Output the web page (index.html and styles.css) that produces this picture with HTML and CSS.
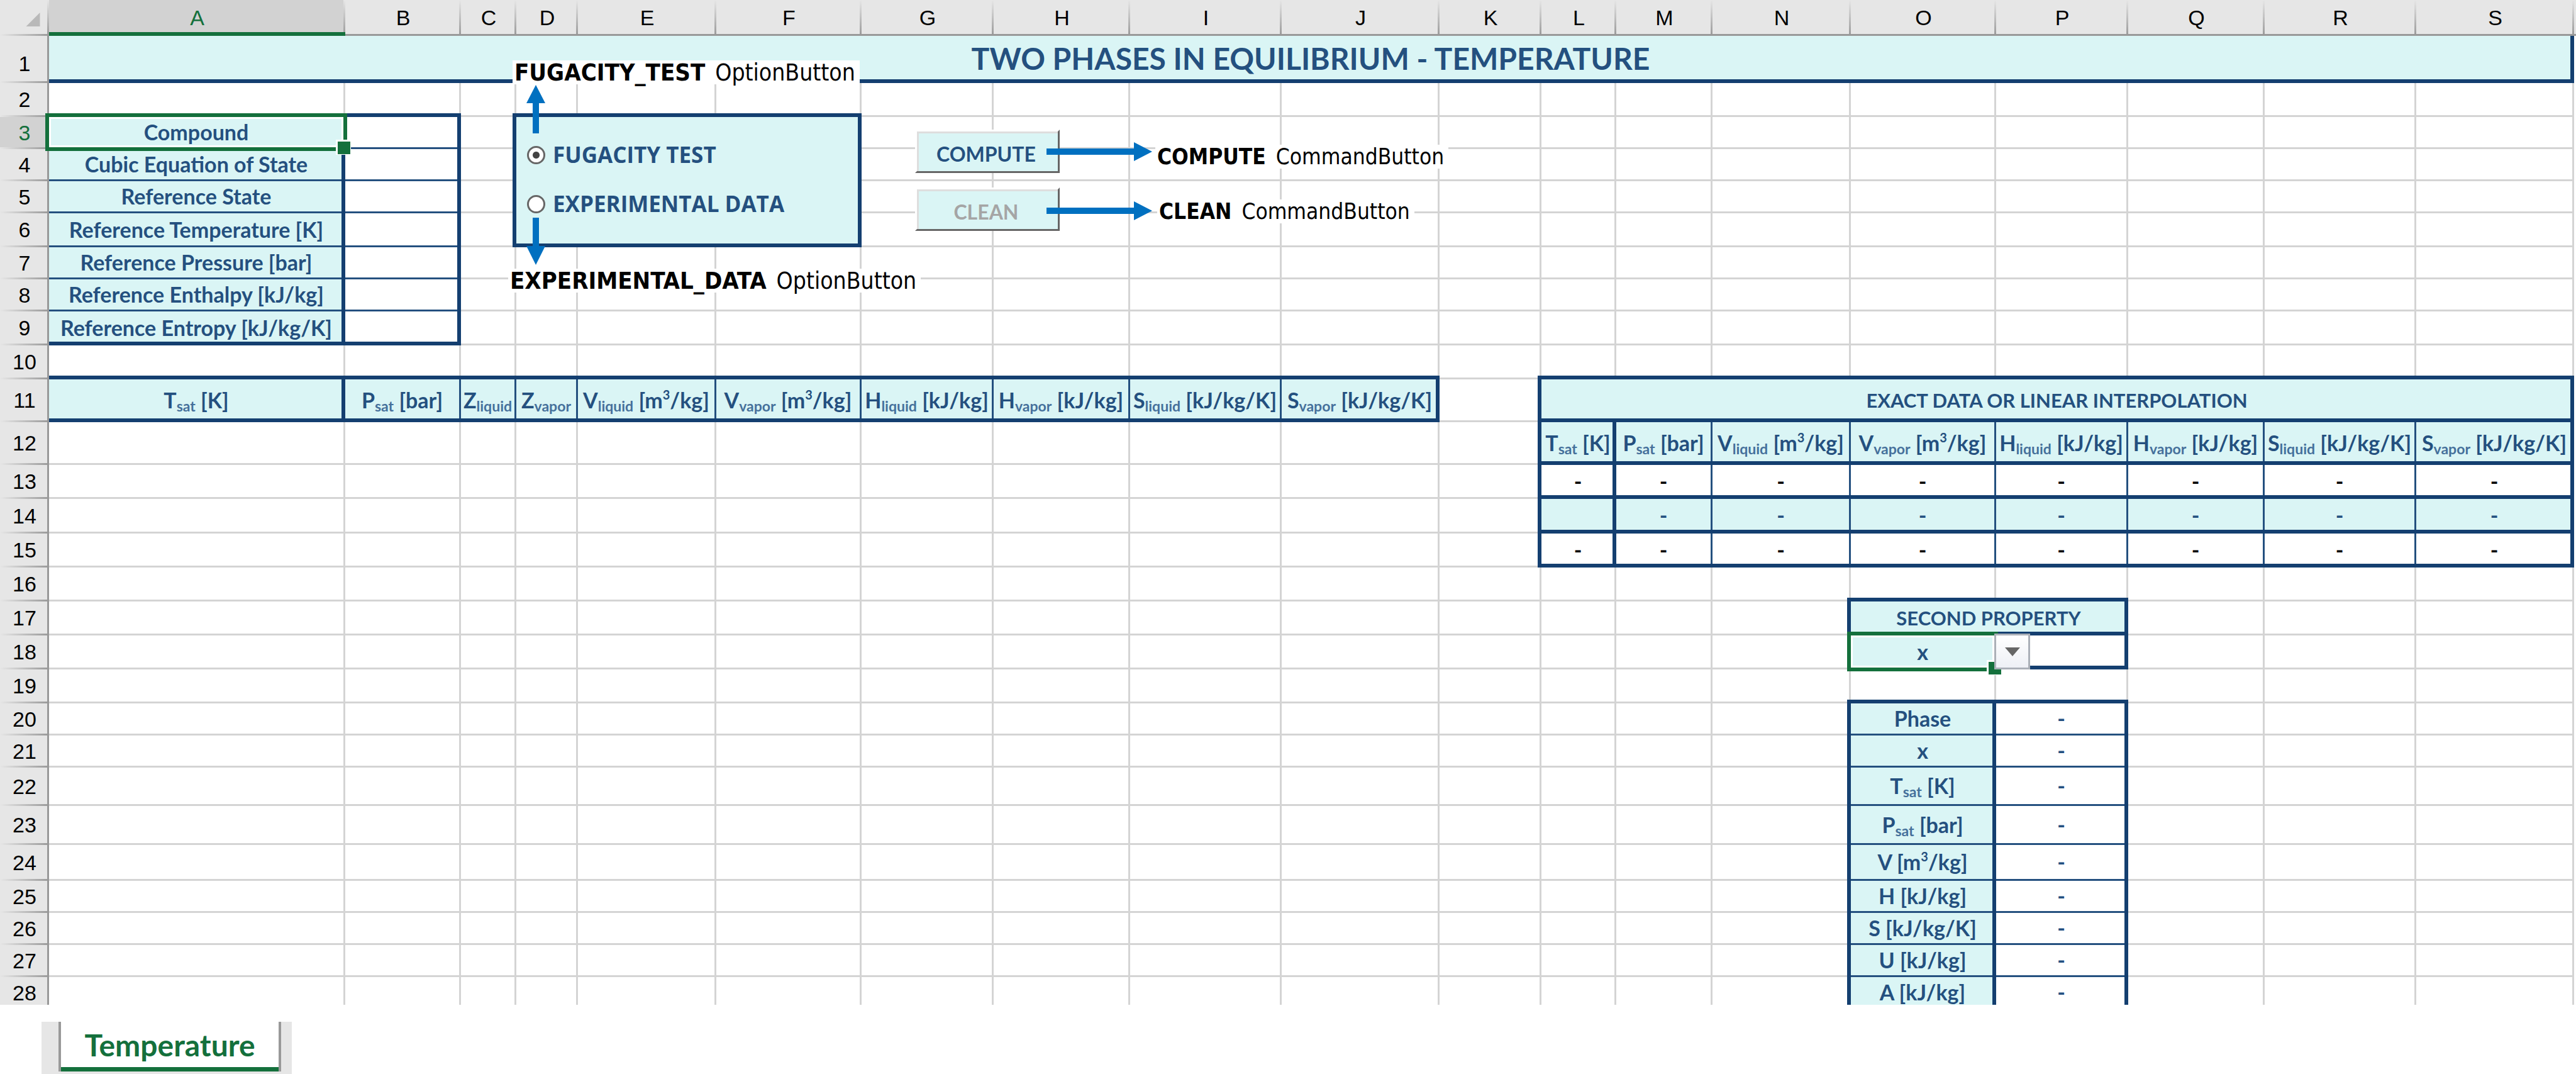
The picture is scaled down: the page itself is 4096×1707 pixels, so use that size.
FILE: index.html
```html
<!DOCTYPE html>
<html lang="en">
<head>
<meta charset="utf-8">
<title>Two phases in equilibrium - Temperature</title>
<link rel="stylesheet" href="styles.css">
</head>
<body>
<main class="sheet">
<table class="grid">
<colgroup><col class="w78"><col class="w471"><col class="w184"><col class="w88"><col class="w98"><col class="w220"><col class="w231"><col class="w210"><col class="w217"><col class="w241"><col class="w251"><col class="w162"><col class="w119"><col class="w153"><col class="w220"><col class="w231"><col class="w210"><col class="w217"><col class="w241"><col class="w251"><col class="w3"></colgroup>
<thead>
<tr class="letters"><td class="corner"><svg class="triangle" viewBox="0 0 22 22" aria-hidden="true"><path d="M22 0V22H0Z"/></svg></td><th class="active">A</th><th>B</th><th>C</th><th>D</th><th>E</th><th>F</th><th>G</th><th>H</th><th>I</th><th>J</th><th>K</th><th>L</th><th>M</th><th>N</th><th>O</th><th>P</th><th>Q</th><th>R</th><th>S</th><td class="edge"></td></tr>
</thead>
<tbody>
<tr class="h75"><th class="low">1</th><td colspan="19" class="fill title mr mb">TWO PHASES IN EQUILIBRIUM - TEMPERATURE</td><td rowspan="28" class="blank"></td></tr>
<tr class="h54"><th>2</th><td class="mb"></td><td class="mb"></td><td class="joint"></td><td class="mb"></td><td class="mb"></td><td class="mb"></td><td></td><td></td><td></td><td></td><td></td><td></td><td></td><td></td><td></td><td></td><td></td><td></td><td></td></tr>
<tr class="h51"><th class="active">3</th><td class="fill mr tb">Compound<span class="selection"></span></td><td class="mr tb"></td><td class="mr"></td><td colspan="3" rowspan="4" class="fill mr mb options"><div class="option-list"><label class="option"><input type="radio" name="mode" checked>FUGACITY TEST</label><label class="option"><input type="radio" name="mode">EXPERIMENTAL DATA</label></div></td><td></td><td></td><td></td><td></td><td></td><td></td><td></td><td></td><td></td><td></td><td></td><td></td><td></td></tr>
<tr class="h51"><th>4</th><td class="fill mr tb">Cubic Equation of State</td><td class="mr tb"></td><td class="mr"></td><td></td><td></td><td></td><td></td><td></td><td></td><td></td><td></td><td></td><td></td><td></td><td></td><td></td></tr>
<tr class="h51"><th>5</th><td class="fill mr tb">Reference State</td><td class="mr tb"></td><td class="mr"></td><td></td><td></td><td></td><td></td><td></td><td></td><td></td><td></td><td></td><td></td><td></td><td></td><td></td></tr>
<tr class="h54"><th>6</th><td class="fill mr tb">Reference Temperature [K]</td><td class="mr tb"></td><td class="mr"></td><td></td><td></td><td></td><td></td><td></td><td></td><td></td><td></td><td></td><td></td><td></td><td></td><td></td></tr>
<tr class="h51"><th>7</th><td class="fill mr tb">Reference Pressure [bar]</td><td class="mr tb"></td><td></td><td></td><td></td><td></td><td></td><td></td><td></td><td></td><td></td><td></td><td></td><td></td><td></td><td></td><td></td><td></td><td></td></tr>
<tr class="h51"><th>8</th><td class="fill mr tb">Reference Enthalpy [kJ/kg]</td><td class="mr tb"></td><td></td><td></td><td></td><td></td><td></td><td></td><td></td><td></td><td></td><td></td><td></td><td></td><td></td><td></td><td></td><td></td><td></td></tr>
<tr class="h54"><th>9</th><td class="fill mr mb">Reference Entropy [kJ/kg/K]</td><td class="mr mb"></td><td></td><td></td><td></td><td></td><td></td><td></td><td></td><td></td><td></td><td></td><td></td><td></td><td></td><td></td><td></td><td></td><td></td></tr>
<tr class="h54"><th>10</th><td class="mb"></td><td class="mb"></td><td class="mb"></td><td class="mb"></td><td class="mb"></td><td class="mb"></td><td class="mb"></td><td class="mb"></td><td class="mb"></td><td class="mb"></td><td class="joint"></td><td class="mb"></td><td class="mb"></td><td class="mb"></td><td class="mb"></td><td class="mb"></td><td class="mb"></td><td class="mb"></td><td class="mb"></td></tr>
<tr class="h68"><th>11</th><td class="fill mr mb">T<sub>sat</sub> [K]</td><td class="fill tr mb">P<sub>sat</sub> [bar]</td><td class="fill tr mb">Z<sub>liquid</sub></td><td class="fill tr mb">Z<sub>vapor</sub></td><td class="fill tr mb">V<sub>liquid</sub> [m<sup>3</sup>/kg]</td><td class="fill tr mb">V<sub>vapor</sub> [m<sup>3</sup>/kg]</td><td class="fill tr mb">H<sub>liquid</sub> [kJ/kg]</td><td class="fill tr mb">H<sub>vapor</sub> [kJ/kg]</td><td class="fill tr mb">S<sub>liquid</sub> [kJ/kg/K]</td><td class="fill mr mb">S<sub>vapor</sub> [kJ/kg/K]</td><td class="mr"></td><td colspan="8" class="fill caps mr mb">EXACT DATA OR LINEAR INTERPOLATION</td></tr>
<tr class="h68"><th>12</th><td></td><td></td><td></td><td></td><td></td><td></td><td></td><td></td><td></td><td></td><td class="mr"></td><td class="fill mr mb">T<sub>sat</sub> [K]</td><td class="fill tr mb">P<sub>sat</sub> [bar]</td><td class="fill tr mb">V<sub>liquid</sub> [m<sup>3</sup>/kg]</td><td class="fill tr mb">V<sub>vapor</sub> [m<sup>3</sup>/kg]</td><td class="fill tr mb">H<sub>liquid</sub> [kJ/kg]</td><td class="fill tr mb">H<sub>vapor</sub> [kJ/kg]</td><td class="fill tr mb">S<sub>liquid</sub> [kJ/kg/K]</td><td class="fill mr mb">S<sub>vapor</sub> [kJ/kg/K]</td></tr>
<tr class="h54 black"><th>13</th><td></td><td></td><td></td><td></td><td></td><td></td><td></td><td></td><td></td><td></td><td class="mr"></td><td class="mr mb">-</td><td class="tr mb">-</td><td class="tr mb">-</td><td class="tr mb">-</td><td class="tr mb">-</td><td class="tr mb">-</td><td class="tr mb">-</td><td class="mr mb">-</td></tr>
<tr class="h55"><th>14</th><td></td><td></td><td></td><td></td><td></td><td></td><td></td><td></td><td></td><td></td><td class="mr"></td><td class="fill mr mb"></td><td class="fill tr mb">-</td><td class="fill tr mb">-</td><td class="fill tr mb">-</td><td class="fill tr mb">-</td><td class="fill tr mb">-</td><td class="fill tr mb">-</td><td class="fill mr mb">-</td></tr>
<tr class="h54 black"><th>15</th><td></td><td></td><td></td><td></td><td></td><td></td><td></td><td></td><td></td><td></td><td class="mr"></td><td class="mr mb">-</td><td class="tr mb">-</td><td class="tr mb">-</td><td class="tr mb">-</td><td class="tr mb">-</td><td class="tr mb">-</td><td class="tr mb">-</td><td class="mr mb">-</td></tr>
<tr class="h54"><th>16</th><td></td><td></td><td></td><td></td><td></td><td></td><td></td><td></td><td></td><td></td><td></td><td></td><td></td><td class="joint"></td><td class="mb"></td><td class="mb"></td><td></td><td></td><td></td></tr>
<tr class="h54"><th>17</th><td></td><td></td><td></td><td></td><td></td><td></td><td></td><td></td><td></td><td></td><td></td><td></td><td></td><td class="mr"></td><td colspan="2" class="fill caps mr mb">SECOND PROPERTY</td><td></td><td></td><td></td></tr>
<tr class="h54"><th>18</th><td></td><td></td><td></td><td></td><td></td><td></td><td></td><td></td><td></td><td></td><td></td><td></td><td></td><td class="mr"></td><td class="fill mr mb"><select class="property" aria-label="Second property"><option>x</option></select><span class="selection"></span><button class="drop" type="button" aria-label="Open list"><svg viewBox="0 0 24 14" aria-hidden="true"><path d="M0 0H24L12 14Z"/></svg></button></td><td class="mr mb"></td><td></td><td></td><td></td></tr>
<tr class="h54"><th>19</th><td></td><td></td><td></td><td></td><td></td><td></td><td></td><td></td><td></td><td></td><td></td><td></td><td></td><td class="joint"></td><td class="mb"></td><td class="mb"></td><td></td><td></td><td></td></tr>
<tr class="h51"><th>20</th><td></td><td></td><td></td><td></td><td></td><td></td><td></td><td></td><td></td><td></td><td></td><td></td><td></td><td class="mr"></td><td class="fill mr tb">Phase</td><td class="mr tb">-</td><td></td><td></td><td></td></tr>
<tr class="h51"><th>21</th><td></td><td></td><td></td><td></td><td></td><td></td><td></td><td></td><td></td><td></td><td></td><td></td><td></td><td class="mr"></td><td class="fill mr tb">x</td><td class="mr tb">-</td><td></td><td></td><td></td></tr>
<tr class="h61"><th>22</th><td></td><td></td><td></td><td></td><td></td><td></td><td></td><td></td><td></td><td></td><td></td><td></td><td></td><td class="mr"></td><td class="fill mr tb">T<sub>sat</sub> [K]</td><td class="mr tb">-</td><td></td><td></td><td></td></tr>
<tr class="h62"><th>23</th><td></td><td></td><td></td><td></td><td></td><td></td><td></td><td></td><td></td><td></td><td></td><td></td><td></td><td class="mr"></td><td class="fill mr tb">P<sub>sat</sub> [bar]</td><td class="mr tb">-</td><td></td><td></td><td></td></tr>
<tr class="h57"><th>24</th><td></td><td></td><td></td><td></td><td></td><td></td><td></td><td></td><td></td><td></td><td></td><td></td><td></td><td class="mr"></td><td class="fill mr tb">V [m<sup>3</sup>/kg]</td><td class="mr tb">-</td><td></td><td></td><td></td></tr>
<tr class="h51"><th>25</th><td></td><td></td><td></td><td></td><td></td><td></td><td></td><td></td><td></td><td></td><td></td><td></td><td></td><td class="mr"></td><td class="fill mr tb">H [kJ/kg]</td><td class="mr tb">-</td><td></td><td></td><td></td></tr>
<tr class="h51"><th>26</th><td></td><td></td><td></td><td></td><td></td><td></td><td></td><td></td><td></td><td></td><td></td><td></td><td></td><td class="mr"></td><td class="fill mr tb">S [kJ/kg/K]</td><td class="mr tb">-</td><td></td><td></td><td></td></tr>
<tr class="h51"><th>27</th><td></td><td></td><td></td><td></td><td></td><td></td><td></td><td></td><td></td><td></td><td></td><td></td><td></td><td class="mr"></td><td class="fill mr tb">U [kJ/kg]</td><td class="mr tb">-</td><td></td><td></td><td></td></tr>
<tr class="h51"><th>28</th><td></td><td></td><td></td><td></td><td></td><td></td><td></td><td></td><td></td><td></td><td></td><td></td><td></td><td class="mr"></td><td class="fill mr tb">A [kJ/kg]</td><td class="mr tb">-</td><td></td><td></td><td></td></tr>
</tbody>
</table>

<button class="command compute" type="button">COMPUTE</button>
<button class="command clean" type="button" disabled>CLEAN</button>

<p class="note note-option note-fugacity"><b>FUGACITY_TEST</b> OptionButton</p>
<p class="note note-option note-experimental"><b>EXPERIMENTAL_DATA</b> OptionButton</p>
<p class="note note-compute"><b>COMPUTE</b> CommandButton</p>
<p class="note note-clean"><b>CLEAN</b> CommandButton</p>

<svg class="arrow arrow-up" viewBox="0 0 30 77" aria-hidden="true"><path d="M15 0L30 29H20V77H10V29H0Z"/></svg>
<svg class="arrow arrow-down" viewBox="0 0 30 75" aria-hidden="true"><path d="M15 75L30 45H20V0H10V45H0Z"/></svg>
<svg class="arrow arrow-compute" viewBox="0 0 168 30" aria-hidden="true"><path d="M168 15L139 0V10H0V20H139V30Z"/></svg>
<svg class="arrow arrow-clean" viewBox="0 0 168 30" aria-hidden="true"><path d="M168 15L139 0V10H0V20H139V30Z"/></svg>
</main>

<nav class="tabs">
<div class="strip"><a class="tab" href="#">Temperature</a></div>
</nav>
</body>
</html>
```
FILE: styles.css
```css
:root {
  --navy: #143f70;
  --navy-thin: #24507f;
  --aqua: #daf5f5;
  --line: #d4d4d4;
  --head: #e6e6e6;
  --head-line: #999;
  --green: #14703c;
  --arrow: #0070c0;
}

* { box-sizing: border-box; }

body {
  margin: 0;
  background: #fff;
  color: var(--navy-thin);
  font: bold 34px/40px Lato, sans-serif;
}

.sheet { position: relative; }

.grid {
  width: 100%;
  table-layout: fixed;
  border-collapse: separate;
  border-spacing: 0;
}

.w3 { width: 3px; }
.w78 { width: 78px; }
.w88 { width: 88px; }
.w98 { width: 98px; }
.w119 { width: 119px; }
.w153 { width: 153px; }
.w162 { width: 162px; }
.w184 { width: 184px; }
.w210 { width: 210px; }
.w217 { width: 217px; }
.w220 { width: 220px; }
.w231 { width: 231px; }
.w241 { width: 241px; }
.w251 { width: 251px; }
.w471 { width: 471px; }

.letters { height: 57px; }
.h51 { height: 51px; }
.h54 { height: 54px; }
.h55 { height: 55px; }
.h57 { height: 57px; }
.h61 { height: 61px; }
.h62 { height: 62px; }
.h68 { height: 68px; }
.h75 { height: 75px; }

/* Cell rules sit on the right and bottom edge: medium, then thin, then gridline. */
.grid td {
  --mr: 0px;
  --mb: 0px;
  --tr: 0px;
  --tb: 0px;
  position: relative;
  padding: 0 3px 3px 0;
  text-align: center;
  vertical-align: middle;
  white-space: nowrap;
  box-shadow:
    inset calc(-1 * var(--mr)) 0 var(--navy),
    inset 0 calc(-1 * var(--mb)) var(--navy),
    inset calc(-1 * var(--tr)) 0 var(--navy-thin),
    inset 0 calc(-1 * var(--tb)) var(--navy-thin),
    inset -3px 0 var(--line),
    inset 0 -3px var(--line);
}

.grid .mr { --mr: 6px; }
.grid .mb { --mb: 6px; }
.grid .tr { --tr: 3px; }
.grid .tb { --tb: 3px; }
.grid .fill { background: var(--aqua); }
.grid .title { font-size: 48px; }
.grid .caps { font-size: 31px; }
.grid .blank { box-shadow: none; }
.black td { color: #000; }

/* Closes the outer corner where two medium rules meet */
.joint::after {
  content: "";
  position: absolute;
  right: 0;
  bottom: 0;
  width: 6px;
  height: 6px;
  background: var(--navy);
}

.grid th {
  padding: 0 0 2px;
  font: 34px/40px "Liberation Sans", sans-serif;
  color: #000;
  text-align: center;
  vertical-align: middle;
  background:
    linear-gradient(var(--head-line), var(--head-line)) right / 3px 100% no-repeat,
    linear-gradient(to right, var(--head), var(--head-line)) bottom / 100% 3px no-repeat,
    var(--head);
}

.grid th.low { padding-top: 14px; }

.grid .letters th {
  background:
    linear-gradient(var(--head-line), var(--head-line)) bottom / 100% 3px no-repeat,
    linear-gradient(var(--head), var(--head-line)) right / 3px 100% no-repeat,
    var(--head);
}

.grid th.active { background-color: #d2d2d2; color: var(--green); }

.grid .letters th.active {
  background:
    linear-gradient(var(--green), var(--green)) bottom / 100% 6px no-repeat,
    linear-gradient(var(--head), var(--head-line)) right / 3px 100% no-repeat,
    #d2d2d2;
}

.grid .corner {
  padding: 0 14px 0 0;
  text-align: right;
  box-shadow: none;
  background:
    linear-gradient(to right, var(--head), var(--head-line)) bottom / 100% 3px no-repeat,
    linear-gradient(var(--head), var(--head-line)) right / 3px 100% no-repeat,
    var(--head);
}

.triangle { display: inline-block; width: 23px; height: 22px; fill: #b9b9b9; }

.grid .edge {
  background: var(--head);
  box-shadow: inset 0 -3px var(--head-line);
}

sub, sup { font-size: 23px; line-height: 0; }
sub { vertical-align: -5px; color: #45709b; }
sup { vertical-align: 14px; font-size: 20px; }

/* Active-cell frame with its fill handle */
.selection {
  position: absolute;
  z-index: 2;
  inset: -6px -3px -3px -6px;
  border: 6px solid var(--green);
  box-shadow: inset 0 0 0 3px #fff;
  pointer-events: none;
}

.selection::after {
  content: "";
  position: absolute;
  right: -12px;
  bottom: -12px;
  width: 20px;
  height: 20px;
  background: var(--green);
  border: 3px solid #fff;
  border-right-width: 1px;
  border-bottom-width: 1px;
}

.property {
  appearance: none;
  display: block;
  width: 100%;
  height: 40px;
  padding: 0;
  border: 0;
  background: transparent;
  color: inherit;
  font: inherit;
  text-align: center;
  text-align-last: center;
}

.drop {
  position: absolute;
  z-index: 3;
  left: 100%;
  top: -3px;
  width: 57px;
  height: 57px;
  margin-left: -3px;
  padding: 0;
  border: 3px solid #abb0b8;
  background: linear-gradient(#fff, #eef0f6);
}

.drop svg { display: block; width: 24px; height: 14px; margin: 0 auto; fill: #666; }

.grid .options { text-align: left; vertical-align: top; }

.option-list {
  display: flex;
  flex-direction: column;
  gap: 38px;
  padding: 40px 0 0 17px;
}

.option {
  display: flex;
  align-items: center;
  gap: 12px;
  height: 40px;
  font: bold 35px/40px "Open Sans", sans-serif;
}

.option input {
  appearance: none;
  flex: none;
  width: 29px;
  height: 29px;
  margin: 0;
  border: 3px solid #666;
  border-radius: 50%;
  background: #fff;
}

.option input:checked { background: radial-gradient(circle, #444 5px, #fff 6px); }

.command {
  position: absolute;
  z-index: 1;
  left: 1455px;
  width: 230px;
  height: 69px;
  padding: 9px 4px 0 0;
  border: 3px solid;
  border-color: #fff #666 #666 #fff;
  background: var(--aqua);
  box-shadow: inset 3px 3px #dedede;
  color: var(--navy-thin);
  font: bold 32px/40px Lato, sans-serif;
}

.compute { top: 206px; }
.clean { top: 298px; color: #a5a5a5; }

.note {
  position: absolute;
  z-index: 1;
  display: flex;
  align-items: baseline;
  gap: 16px;
  height: 38px;
  margin: 0;
  padding: 0 7px 0 3px;
  background: #fff;
  color: #000;
  font: 35px/38px "DejaVu Sans Condensed", "Open Sans", sans-serif;
  white-space: nowrap;
}

.note-option { font-size: 37px; }
.note-option b { font-size: 38px; }

.note-fugacity { left: 815px; top: 96px; }
.note-experimental { left: 808px; top: 427px; }
.note-compute { left: 1837px; top: 230px; }
.note-clean { left: 1840px; top: 317px; }

.arrow { position: absolute; z-index: 2; fill: var(--arrow); }
.arrow-up { left: 837px; top: 135px; width: 30px; height: 77px; }
.arrow-down { left: 837px; top: 346px; width: 30px; height: 75px; }
.arrow-compute { left: 1664px; top: 226px; width: 168px; height: 30px; }
.arrow-clean { left: 1664px; top: 320px; width: 168px; height: 30px; }

/* The tab bar overlaps the last row, which the window cuts off. */
.tabs {
  position: relative;
  z-index: 4;
  margin-top: -7px;
  padding: 27px 0 0 66px;
  background: #fff;
}

.strip {
  display: flex;
  width: 398px;
  height: 83px;
  padding: 0 17px 4px 27px;
  background: var(--head);
}

.tab {
  flex: 1;
  border: solid var(--head-line);
  border-width: 0 4px;
  box-shadow: inset 0 -7px var(--green);
  background: #fff;
  color: var(--green);
  font: bold 48px/74px Lato, sans-serif;
  text-align: center;
  text-decoration: none;
}
```
